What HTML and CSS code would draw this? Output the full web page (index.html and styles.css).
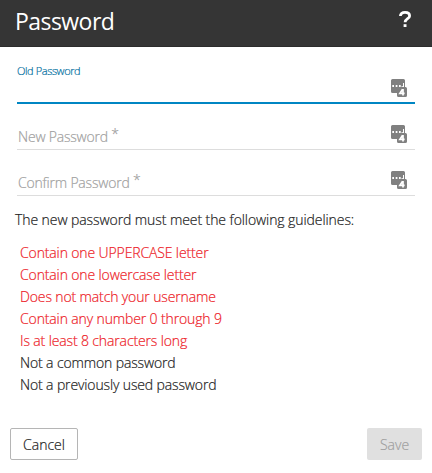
FILE: index.html
```html
<!DOCTYPE html>
<html lang="en">
<head>
<meta charset="utf-8">
<title>Password</title>
<link rel="stylesheet" href="styles.css">
</head>
<body>
<svg class="defs" width="0" height="0" aria-hidden="true">
  <symbol id="manager" viewBox="0 0 16 18">
    <path d="M1.5 0h11Q14 0 14 1.5V8h.5Q16 8 16 9.500V16.500Q16 18 14.500 18h-7Q6 18 6 16.500V14H1.500Q0 14 0 12.500v-11Q0 0 1.500 0z" fill="#808080"/>
    <path d="M1.300 6h1.700v2H1.300zM4.700 6h1.700v2H4.700zM8 6h1.700v2H8zM10.600 7h1.200v1h-1.200zM12 4h1v4h-1z" fill="#fff"/>
    <path d="M11.600 10.300L8.900 14.300H13.600M12 10V16.500" fill="none" stroke="#fff" stroke-width="1.700"/>
  </symbol>
</svg>
<header class="header">
  <h1>Password</h1>
  <svg class="help" viewBox="0 0 12 16"><path d="M1.4 5.1C1.4 2.6 3.2 1.400 6 1.400S10.600 2.700 10.600 4.900C10.600 7.700 6.100 7.600 6.100 11.300" fill="none" stroke="#fff" stroke-width="2.800"/><path d="M4.600 13.200h2.900V16H4.600z" fill="#fff"/></svg>
</header>
<main>
  <div class="field active"><label>Old Password</label><svg class="manager"><use href="#manager"/></svg></div>
  <div class="field"><label>New Password <span class="star">*</span></label><svg class="manager"><use href="#manager"/></svg></div>
  <div class="field"><label>Confirm Password <span class="star">*</span></label><svg class="manager"><use href="#manager"/></svg></div>
  <p class="intro">The new password must meet the following guidelines:</p>
  <ul class="rules">
    <li class="unmet">Contain one UPPERCASE letter</li>
    <li class="unmet">Contain one lowercase letter</li>
    <li class="unmet">Does not match your username</li>
    <li class="unmet">Contain any number 0 through 9</li>
    <li class="unmet">Is at least 8 characters long</li>
    <li>Not a common password</li>
    <li>Not a previously used password</li>
  </ul>
</main>
<footer>
  <button class="cancel">Cancel</button>
  <button class="save" disabled>Save</button>
</footer>
</body>
</html>
```
FILE: styles.css
```css
* { box-sizing: border-box; }
body {
  margin: 0;
  height: 473px;
  display: flex;
  flex-direction: column;
  overflow: hidden;
  background: #fff;
  color: #222;
  font: 300 14px/22px "Open Sans", "Noto Sans", sans-serif;
  letter-spacing: -0.13px;
  -webkit-text-stroke: 0.2px currentColor;
}
.defs { position: absolute; }
.header {
  height: 47px;
  padding: 0 21px 0 15px;
  display: flex;
  justify-content: space-between;
  background: #353535;
  border-bottom: 1px solid #2c2c2c;
  color: #fff;
}
h1 { margin: 0; font-size: 23px; line-height: 43px; font-weight: 400; letter-spacing: -0.55px; -webkit-text-stroke: 0; }
.help { width: 12px; height: 16px; margin-top: 11px; }
main { flex: 1; }
.field {
  height: 46px;
  margin: 0 17px;
  padding: 0 8px 6px 1px;
  display: flex;
  justify-content: space-between;
  align-items: flex-end;
  border-bottom: 1px solid #ddd;
  color: #a0a0a0;
  letter-spacing: -0.2px;
}
.field label { line-height: 22px; margin-bottom: -5px; }
.star { position: relative; top: -3px; }
.active {
  height: 57px;
  padding: 0 8px 5px 0;
  border-bottom: 2px solid #0086c3;
  color: #00709f;
  font-size: 11px;
  letter-spacing: -0.4px;
}
.active label { align-self: flex-start; margin-top: 13px; }
.manager { width: 16px; height: 18px; }
.intro { margin: 13px 15px 11px; letter-spacing: -0.08px; }
.rules { margin: 0; padding: 0 20px; list-style: none; }
.unmet { color: #ed1c28; }
footer { display: flex; justify-content: space-between; padding: 0 10px 13px; }
button { height: 32px; padding: 1px 0 0; border-radius: 2px; font: inherit; letter-spacing: 0; }
.cancel { width: 68px; background: #fff; border: 1px solid #b5b5b5; color: #222; }
.save { width: 55px; background: #e0e0e0; border: 0; color: #a0a0a0; }
```
